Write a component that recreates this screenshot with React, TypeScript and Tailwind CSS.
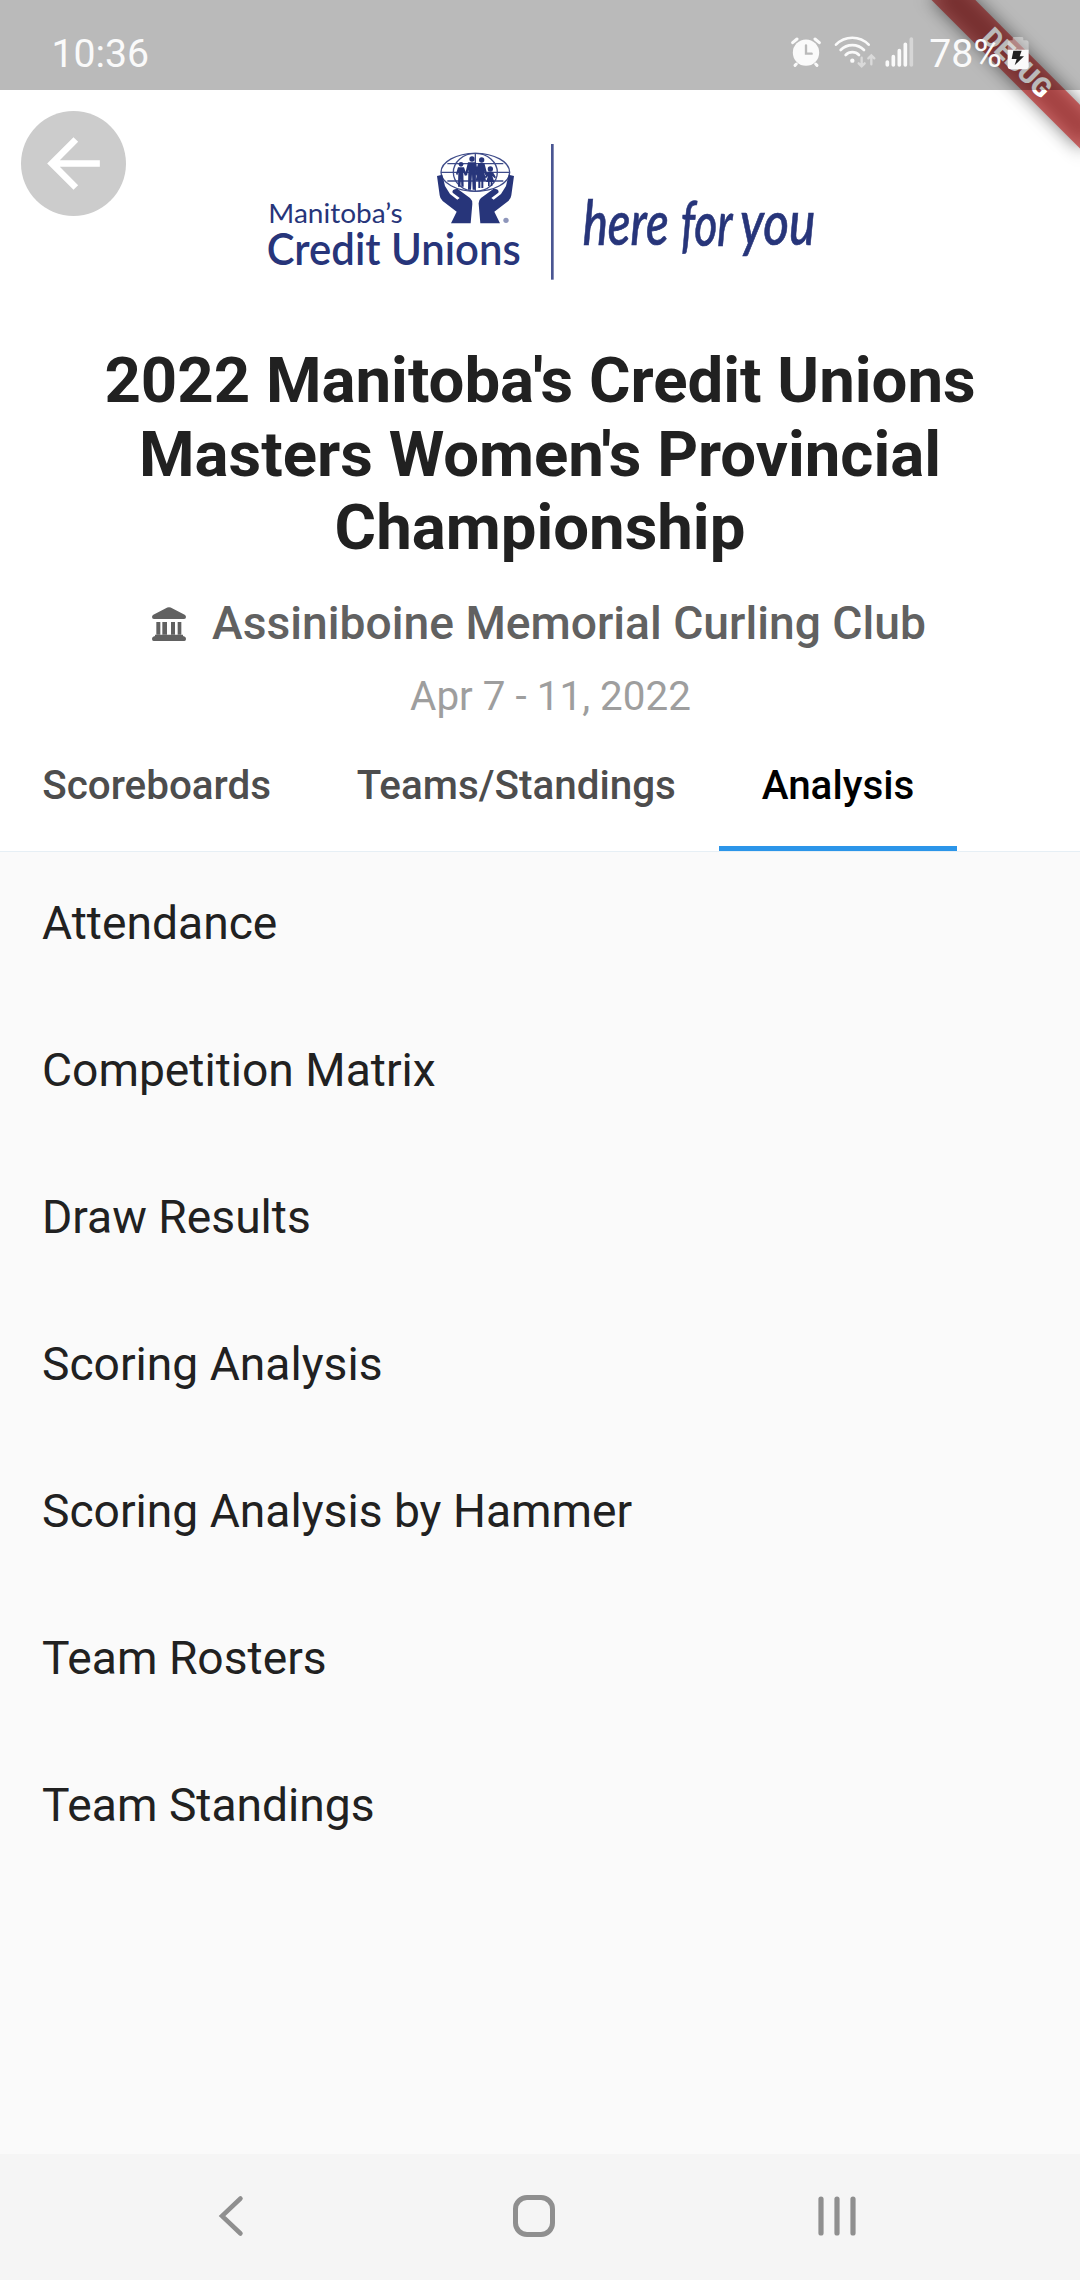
const TABS = [
  { label: 'Scoreboards', active: false },
  { label: 'Teams/Standings', active: false },
  { label: 'Analysis', active: true },
];

const REPORTS = [
  'Attendance',
  'Competition Matrix',
  'Draw Results',
  'Scoring Analysis',
  'Scoring Analysis by Hammer',
  'Team Rosters',
  'Team Standings',
];

function DebugBanner() {
  return (
    <div className="pointer-events-none absolute top-0 right-0 size-[260px] overflow-hidden">
      <div className="absolute top-0 left-[260px] h-0 w-0 origin-top-left rotate-45">
        <div className="absolute top-[73.5px] left-[-105px] h-[31.5px] w-[210px] bg-black/50 blur-[9px]" />
        <div className="absolute top-[73.5px] left-[-105px] flex h-[31.5px] w-[210px] items-center justify-center bg-[#b71c1c]/63 text-[26.8px] leading-none font-black text-white">
          DEBUG
        </div>
      </div>
    </div>
  );
}

function StatusIcons() {
  return (
    <svg className="h-[40px] w-[126px]" viewBox="0 0 378 120" fill="none" stroke="#fafafa" strokeLinecap="round">
      {/* alarm clock */}
      <circle cx="45" cy="62" r="39.5" fill="#fafafa" stroke="none" />
      <path d="M5 32 18 21M85 32 72 21" strokeWidth="9" />
      <path d="M16 96 12 100M74 96 78 100" strokeWidth="9" />
      <path d="M45 40v25h17" stroke="#bababa" strokeWidth="7" />
      {/* wifi */}
      <path d="M135 38a68 68 0 0 1 98 0" strokeWidth="8" />
      <path d="M149 54a49 49 0 0 1 70 0" strokeWidth="8" />
      <path d="M164 69a28 28 0 0 1 40 0" strokeWidth="8" />
      <circle cx="184" cy="86" r="6.5" fill="#fafafa" stroke="none" />
      <path d="M212 77v26m-9-9 9 9 9-9M241 97V70m-9 9 9-9 9 9" stroke="#dadada" strokeWidth="7" />
      {/* signal strength */}
      <path d="M289 90v9M307 74v25M325 56v43M343 37v62" strokeWidth="11" />
      <path d="M361 21v78" stroke="#d6d6d6" strokeWidth="11" />
    </svg>
  );
}

function BatteryIcon() {
  return (
    <svg className="h-[33px] w-[22px]" viewBox="0 0 66 99">
      <path d="M17 4q0-4 5-4h22q5 0 5 4v6h8q8 0 8 8v22H2V18q0-8 8-8h7z" fill="#fff" opacity=".38" />
      <path d="M2 38h63v50q0 9-9 9H11q-9 0-9-9z" fill="#fafafa" />
      <path d="M19 41h25l-6 17h13L23 85l6-19H14z" fill="#212121" />
    </svg>
  );
}

function StatusBar() {
  return (
    <div className="relative z-20 flex h-[90px] shrink-0 bg-black/27 pt-[31px] pr-[51px] pl-[51.5px] text-[39.2px] leading-[46px] text-[#fafafa]">
      <span className="grow">10:36</span>
      <div className="flex">
        <div className="pt-[1px] pr-[12px]">
          <StatusIcons />
        </div>
        <span>78%</span>
        <div className="pt-[6px] pl-[5px]">
          <BatteryIcon />
        </div>
      </div>
    </div>
  );
}

function Hand() {
  return (
    <path d="M561 138 577 134 585 168 600 192 622 209 629 204 608 188Q604 177 622 176L660 204Q668 211 667 222L662 280H603L620 245 578 213Q570 206 569 196Z" />
  );
}

function SponsorLogo() {
  return (
    <svg className="h-[160px] w-[580px]" viewBox="0 0 1740 480" fill="#27357a">
      <g fill="none" stroke="#3f4c8a" strokeWidth="4">
        <ellipse cx="676" cy="127" rx="103" ry="57" />
        <ellipse cx="676" cy="127" rx="66" ry="57" />
        <path d="M676 70v114M592 101h168M573 127h206M592 153h168" />
      </g>
      {/* family */}
      <circle cx="633" cy="103" r="7" />
      <path d="M624 112h18l8 22-5 4-5-12 1 44h-7l-1-24-2 24h-7l1-44-3 10-4-4z" />
      <circle cx="666" cy="87" r="8" />
      <path d="M654 97h24l7 36-6 4-3-18v60h-8l-2-46-3 46h-9l1-60-4 18-6-4z" />
      <circle cx="695" cy="90" r="8" />
      <path d="M685 99h18l9 34-6 3-4-14 6 30h-8v22h-6v-22h-3v22h-6v-22h-8l6-30-4 14-5-3z" />
      <circle cx="721" cy="117" r="8" />
      <path d="M713 125h15l10 17-4 3-7-7 6 18h-6v12h-5v-12h-3v12h-5v-12h-6l6-18-6 7-4-3z" />
      <Hand />
      <g transform="matrix(-1 0 0 1 1353 0)">
        <Hand />
      </g>
      <circle cx="768" cy="271" r="8" fill="#8e96bb" />
      <text x="55" y="278" className="font-[Lato] text-[83px]" textLength="403" lengthAdjust="spacingAndGlyphs">
        Manitoba’s
      </text>
      <text x="50" y="406" className="font-[Lato] text-[130px] font-semibold" textLength="762" lengthAdjust="spacingAndGlyphs">
        Credit Unions
      </text>
      <rect x="903" y="42" width="8" height="407" fill="#4a5692" />
      <g className="font-[Lato] text-[186px] font-medium italic" stroke="#27357a" strokeWidth="2">
        <text x="998" y="346" textLength="258" lengthAdjust="spacingAndGlyphs">
          here
        </text>
        <text x="1292" y="348" textLength="156" lengthAdjust="spacingAndGlyphs">
          for
        </text>
        <text x="1470" y="346" textLength="226" lengthAdjust="spacingAndGlyphs">
          you
        </text>
      </g>
    </svg>
  );
}

function ClubIcon() {
  return (
    <svg className="mt-[11px] size-[34px] shrink-0" viewBox="0 0 102 102" fill="#616161">
      <path d="M46 1.500q5-2 10 0L98 23q4 2 4 7 0 6-6 6H6q-6 0-6-6 0-5 4-7z" />
      <path d="M13 45h12v38H13zM31 45h14v38H31zM57 45h12v38H57zM77 45h11v38H77z" />
      <path d="M9 83h84v4q9 2 9 9 0 6-5 6H5q-5 0-5-6 0-7 9-9z" />
    </svg>
  );
}

export default function App() {
  return (
    <div className="relative flex h-[2280px] w-[1080px] flex-col overflow-hidden bg-white font-[Roboto,sans-serif]">
      <DebugBanner />
      <StatusBar />

      <header className="relative flex flex-col items-center">
        <button className="absolute top-[21px] left-[21px] flex size-[105px] items-center justify-center rounded-full bg-[#cccccc]">
          <svg className="size-[79px]" viewBox="0 0 24 24" fill="#fff">
            <path d="M20 11H7.830l5.590-5.590L12 4l-8 8 8 8 1.410-1.410L7.830 13H20v-2z" />
          </svg>
        </button>
        <div className="pt-[40px]">
          <SponsorLogo />
        </div>
        <h1 className="w-[960px] pt-[54px] text-center text-[63.5px] leading-[73.5px] font-bold text-[#212121]">
          2022 Manitoba's Credit Unions Masters Women's Provincial Championship
        </h1>
        <div className="flex gap-[26px] pt-[31px] pr-[2px] text-[46.2px] leading-[54px] font-medium text-[#616161]">
          <ClubIcon />
          <span>Assiniboine Memorial Curling Club</span>
        </div>
        <p className="pt-[23.5px] pl-[21px] text-[40.4px] leading-[48px] text-[#9e9e9e]">Apr 7 - 11, 2022</p>
      </header>

      <nav className="flex h-[131px] shrink-0 border-b border-[#e6eff5] text-[40.4px] leading-[48px] font-medium">
        {TABS.map((t) => (
          <div
            key={t.label}
            className={
              t.active
                ? 'border-b-[5px] border-[#2b95e9] px-[43px] pt-[41px] text-black'
                : 'px-[42.8px] pt-[41px] text-[#4d4d4d] first:-ml-[0.6px]'
            }
          >
            {t.label}
          </div>
        ))}
      </nav>

      <ul className="grow bg-[#fafafa] text-[46.2px] leading-[54px] text-[#212121]">
        {REPORTS.map((r) => (
          <li key={r} className="h-[147px] px-[42px] pt-[44px]">
            {r}
          </li>
        ))}
      </ul>

      <footer className="flex h-[126px] shrink-0 items-center bg-[#f5f5f5] pr-[92px] pb-[2px] pl-[80px]">
        <div className="flex flex-1 justify-center">
          <svg className="h-[42px] w-[26px]" viewBox="0 0 26 42" fill="none" stroke="#8f8f8f" strokeWidth="4.500" strokeLinecap="round">
            <path d="M22.500 3.500 4 21l18.500 17.500" strokeLinejoin="miter" />
          </svg>
        </div>
        <div className="flex flex-1 justify-center">
          <div className="size-[42px] rounded-[14px] border-5 border-[#8f8f8f]" />
        </div>
        <div className="flex flex-1 justify-center">
          <svg className="h-[40px] w-[38px]" viewBox="0 0 38 40" stroke="#8f8f8f" strokeWidth="5.200" strokeLinecap="round">
            <path d="M3 3v34M19 3v34M35 3v34" />
          </svg>
        </div>
      </footer>
    </div>
  );
}
